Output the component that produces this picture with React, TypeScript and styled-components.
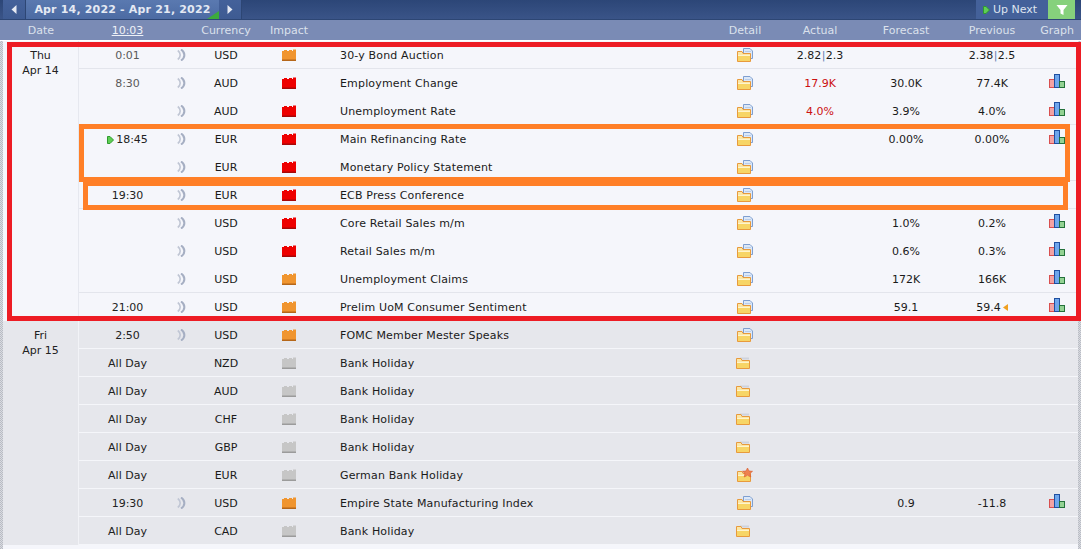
import React from "react";
import styled, { createGlobalStyle } from "styled-components";

const Global = createGlobalStyle`
  html, body { margin: 0; padding: 0; background: #fff; }
  body { font-family: "DejaVu Sans", Verdana, sans-serif; font-size: 11px; color: #111; width: 1081px; height: 549px; overflow: hidden; }
`;

const COLS = "97px 10px 80px 46px 402px 62px 88px 84px 88px 42px";

const Page = styled.div`
  position: relative;
  width: 1081px;
  height: 549px;
  overflow: hidden;
  background: #fff;
`;
const TopBar = styled.div`
  display: flex;
  height: 20px;
  padding-left: 3px;
  background: linear-gradient(#2c4677, #3a5488);
  box-sizing: border-box;
  border-bottom: 1px solid #2d4674;
`;
const NavButton = styled.div`
  width: 22px;
  display: flex;
  align-items: center;
  justify-content: center;
  background: linear-gradient(#44619a, #3e5b92);
  border-right: 1px solid #2d4674;
`;
const RangeTab = styled.div`
  position: relative;
  width: 193px;
  display: flex;
  align-items: center;
  justify-content: center;
  background: linear-gradient(#5a79b0, #4c6ba3);
  color: #e4e9f3;
  font-weight: bold;
  font-size: 11px;
  letter-spacing: 0.18px;
  white-space: nowrap;
`;
const CornerFlag = styled.span`
  position: absolute;
  right: 0;
  bottom: 0;
  width: 12px;
  height: 8px;
  background: #3cab3c;
  clip-path: polygon(100% 0, 100% 100%, 0 100%);
`;
const Spacer = styled.div`
  flex: 1;
`;
const UpNext = styled.div`
  width: 72px;
  display: flex;
  align-items: center;
  gap: 3px;
  padding-left: 7px;
  box-sizing: border-box;
  background: #44619a;
  color: #dfe5f0;
  font-size: 11px;
`;
const FilterButton = styled.div`
  width: 27px;
  margin-right: 6px;
  display: flex;
  align-items: center;
  justify-content: center;
  background: #86d17c;
`;
const HeaderRow = styled.div`
  display: grid;
  grid-template-columns: 76px ${COLS};
  height: 20px;
  padding-left: 3px;
  align-items: center;
  background: #7a8bb5;
  color: #dbe1ec;
  font-size: 11px;
  text-align: center;
`;
const Clock = styled.span`
  color: #eef1f7;
  text-decoration: underline;
`;
const Table = styled.div`
  margin: 1px 3px 0;
  background: #f5f6fb;
`;
const Edge = styled.div<{ $side: "left" | "right" }>`
  position: absolute;
  top: 41px;
  bottom: 0;
  ${(p) => p.$side}: 0;
  width: 3px;
  background: repeating-conic-gradient(#b9bcc4 0 25%, #d8dae0 0 50%) 0 0 / 2px 2px;
`;
const Day = styled.div<{ $dim?: boolean }>`
  display: flex;
  background: ${(p) => (p.$dim ? "#e6e7ec" : "#f5f6fb")};
`;
const DateCell = styled.div<{ $dim?: boolean }>`
  width: 76px;
  box-sizing: border-box;
  padding-top: 7px;
  text-align: center;
  line-height: 15px;
  color: #222;
  border-right: 1px solid ${(p) => (p.$dim ? "#f2f3f7" : "#e6e8ef")};
`;
const Rows = styled.div`
  flex: 1;
`;
const Row = styled.div<{ $dim?: boolean; $line?: boolean }>`
  display: grid;
  grid-template-columns: ${COLS};
  height: 28px;
  box-sizing: border-box;
  align-items: center;
  padding-top: ${(p) => (p.$line ? 2 : 1)}px;
  border-bottom: ${(p) => (p.$line ? `1px solid ${p.$dim ? "#f5f6fa" : "#e3e5ec"}` : "none")};
  color: #1a1a1a;
  text-align: center;
`;
const TimeText = styled.div<{ $past?: boolean }>`
  display: flex;
  align-items: center;
  justify-content: center;
  gap: 2px;
  color: ${(p) => (p.$past ? "#5a5a5a" : "#222")};
`;
const EventName = styled.div`
  padding-left: 28px;
  text-align: left;
  white-space: nowrap;
  letter-spacing: 0.16px;
`;
const IconCell = styled.div<{ $lift?: number }>`
  display: flex;
  align-items: center;
  justify-content: center;
  height: 15px;
  margin-bottom: ${(p) => (p.$lift ?? 0) * 2}px;
`;
const Value = styled.div<{ $bad?: boolean }>`
  display: flex;
  align-items: center;
  justify-content: center;
  gap: 2px;
  color: ${(p) => (p.$bad ? "#cc1111" : "#1a1a1a")};
`;
const Pipe = styled.span`
  color: #5f7fb0;
  margin: 0 0.5px;
`;
const Foot = styled.div`
  height: 4px;
  background: #f5f6fb;
`;
const Frame = styled.div<{ $x: number; $y: number; $w: number; $h: number; $c: string }>`
  position: absolute;
  left: ${(p) => p.$x}px;
  top: ${(p) => p.$y}px;
  width: ${(p) => p.$w}px;
  height: ${(p) => p.$h}px;
  box-sizing: border-box;
  border: 5px solid ${(p) => p.$c};
  pointer-events: none;
`;

const Arrow = ({ dir }: { dir: "l" | "r" }) => (
  <svg width="6" height="9" viewBox="0 0 6 9">
    <path d={dir === "l" ? "M5.5 0 L5.5 9 L0.5 4.5 Z" : "M0.5 0 L0.5 9 L5.5 4.5 Z"} fill="#e6eaf3" />
  </svg>
);
const Play = () => (
  <svg width="7" height="8" viewBox="0 0 7 8">
    <path d="M0.5 0.5 H3 L6.5 4 L3 7.5 H0.5 Z" fill="#5fce55" stroke="#2f9a2f" />
  </svg>
);
const Funnel = () => (
  <svg width="12" height="12" viewBox="0 0 12 12">
    <path d="M0.5 1 H11.5 L7.5 6 V11 L4.5 9.5 V6 Z" fill="#fff" />
  </svg>
);
const Sound = () => (
  <svg width="9" height="12" viewBox="0 0 9 12" fill="none">
    <path d="M0.8 1.5 C4 4 4 8 0.8 10.5" stroke="#c0c6d4" strokeWidth="1.6" />
    <path d="M4 0.5 C8.5 3.5 8.5 8.5 4 11.5" stroke="#a6afc3" strokeWidth="2" />
  </svg>
);
const IMPACT = {
  red: ["#ee0000", "#a80808"],
  orange: ["#f0952f", "#b5671a"],
  gray: ["#c6c6c6", "#9b9b9b"],
};
const Impact = ({ level }: { level: keyof typeof IMPACT }) => (
  <svg width="14" height="12" viewBox="0 0 14 12">
    <path d="M0 3 V2 H2 V1 H5 V2 H7 V1 H10 V2 H11 V0.5 H14 V12 H0 Z" fill={IMPACT[level][0]} />
    <rect x="0" y="10.5" width="14" height="1.5" fill={IMPACT[level][1]} />
  </svg>
);
const Folder = ({ kind }: { kind: "doc" | "plain" | "star" }) => (
  <svg width="16" height="14" viewBox="0 0 16 14" style={{ marginLeft: kind === "plain" ? -2 : 0 }}>
    {kind === "doc" && (
      <>
        <path d="M6.5 0.5 H13 L15.5 3 V10.5 H6.5 Z" fill="#dce8f8" stroke="#7f9fd0" />
        <rect x="8" y="3" width="6" height="1" fill="#b9cde9" />
      </>
    )}
    {kind === "plain" && <rect x="4" y="2.5" width="9" height="2" fill="#cfd3dc" />}
    <path d="M0.5 3.5 V13.5 H13.5 V5.5 H6 L5 3.5 Z" fill="#fbe7a6" stroke="#e89a3c" />
    <path d="M1 8 H13 V13 H1 Z" fill="#f7d566" />
    <path d="M1 7.5 H13" stroke="#fff4cc" />
    {kind === "star" && (
      <path d="M10.5 0 L12 3 L15.5 3.3 L13 5.5 L13.8 9 L10.5 7.3 L7.2 9 L8 5.5 L5.5 3.3 L9 3 Z" fill="#ee8250" stroke="#d9582a" strokeWidth="0.6" />
    )}
  </svg>
);
const Bars = () => (
  <svg width="16" height="14" viewBox="0 0 16 14">
    <rect x="0.5" y="5.5" width="5" height="8" fill="#f3a3a3" stroke="#d84f4f" />
    <rect x="5.5" y="0.5" width="5" height="13" fill="#6ea6ec" stroke="#1f4fa0" />
    <rect x="10.5" y="7.5" width="5" height="6" fill="#93d293" stroke="#23713a" />
  </svg>
);

type Ev = {
  time?: string;
  past?: boolean;
  next?: boolean;
  sound?: boolean;
  cur: string;
  imp: keyof typeof IMPACT;
  name: string;
  folder?: "doc" | "plain" | "star";
  actual?: React.ReactNode;
  bad?: boolean;
  forecast?: string;
  previous?: React.ReactNode;
  revised?: boolean;
  graph?: boolean;
  line?: boolean;
};

const pair = (a: string, b: string) => (
  <span>
    {a}
    <Pipe>|</Pipe>
    {b}
  </span>
);

const THU: Ev[] = [
  { time: "0:01", past: true, sound: true, cur: "USD", imp: "orange", name: "30-y Bond Auction", actual: pair("2.82", "2.3"), previous: pair("2.38", "2.5"), line: true },
  { time: "8:30", past: true, sound: true, cur: "AUD", imp: "red", name: "Employment Change", actual: "17.9K", bad: true, forecast: "30.0K", previous: "77.4K", graph: true },
  { sound: true, cur: "AUD", imp: "red", name: "Unemployment Rate", actual: "4.0%", bad: true, forecast: "3.9%", previous: "4.0%", graph: true, line: true },
  { time: "18:45", next: true, sound: true, cur: "EUR", imp: "red", name: "Main Refinancing Rate", forecast: "0.00%", previous: "0.00%", graph: true },
  { sound: true, cur: "EUR", imp: "red", name: "Monetary Policy Statement", line: true },
  { time: "19:30", sound: true, cur: "EUR", imp: "red", name: "ECB Press Conference", line: true },
  { sound: true, cur: "USD", imp: "red", name: "Core Retail Sales m/m", forecast: "1.0%", previous: "0.2%", graph: true },
  { sound: true, cur: "USD", imp: "red", name: "Retail Sales m/m", forecast: "0.6%", previous: "0.3%", graph: true },
  { sound: true, cur: "USD", imp: "orange", name: "Unemployment Claims", forecast: "172K", previous: "166K", graph: true, line: true },
  { time: "21:00", sound: true, cur: "USD", imp: "orange", name: "Prelim UoM Consumer Sentiment", forecast: "59.1", previous: "59.4", revised: true, graph: true, line: true },
];
const FRI: Ev[] = [
  { time: "2:50", sound: true, cur: "USD", imp: "orange", name: "FOMC Member Mester Speaks", line: true },
  { time: "All Day", cur: "NZD", imp: "gray", name: "Bank Holiday", folder: "plain", line: true },
  { time: "All Day", cur: "AUD", imp: "gray", name: "Bank Holiday", folder: "plain", line: true },
  { time: "All Day", cur: "CHF", imp: "gray", name: "Bank Holiday", folder: "plain", line: true },
  { time: "All Day", cur: "GBP", imp: "gray", name: "Bank Holiday", folder: "plain", line: true },
  { time: "All Day", cur: "EUR", imp: "gray", name: "German Bank Holiday", folder: "star", line: true },
  { time: "19:30", sound: true, cur: "USD", imp: "orange", name: "Empire State Manufacturing Index", forecast: "0.9", previous: "-11.8", graph: true, line: true },
  { time: "All Day", cur: "CAD", imp: "gray", name: "Bank Holiday", folder: "plain", line: true },
];

const RevisedMark = () => (
  <svg width="5" height="7" viewBox="0 0 5 7">
    <path d="M5 0 V7 L0 3.5 Z" fill="#f0a020" />
  </svg>
);

const EventRow = ({ e, dim }: { e: Ev; dim?: boolean }) => (
  <Row $dim={dim} $line={e.line}>
    <TimeText $past={e.past}>
      {e.next && <Play />}
      {e.time}
    </TimeText>
    <IconCell $lift={1}>{e.sound && <Sound />}</IconCell>
    <div>{e.cur}</div>
    <IconCell $lift={1}>
      <Impact level={e.imp} />
    </IconCell>
    <EventName>{e.name}</EventName>
    <IconCell $lift={e.folder === "plain" ? 2 : 1}>
      <Folder kind={e.folder ?? "doc"} />
    </IconCell>
    <Value $bad={e.bad}>{e.actual}</Value>
    <Value>{e.forecast}</Value>
    <Value>
      {e.previous}
      {e.revised && <RevisedMark />}
    </Value>
    <IconCell $lift={3}>{e.graph && <Bars />}</IconCell>
  </Row>
);

export default function App() {
  return (
    <Page>
      <Global />
      <TopBar>
        <NavButton>
          <Arrow dir="l" />
        </NavButton>
        <RangeTab>
          Apr 14, 2022 - Apr 21, 2022
          <CornerFlag />
        </RangeTab>
        <NavButton>
          <Arrow dir="r" />
        </NavButton>
        <Spacer />
        <UpNext>
          <Play />
          Up Next
        </UpNext>
        <FilterButton>
          <Funnel />
        </FilterButton>
      </TopBar>
      <HeaderRow>
        <span>Date</span>
        <Clock>10:03</Clock>
        <span />
        <span>Currency</span>
        <span>Impact</span>
        <span />
        <span>Detail</span>
        <span>Actual</span>
        <span>Forecast</span>
        <span>Previous</span>
        <span>Graph</span>
      </HeaderRow>
      <Table>
        <Day>
          <DateCell>
            Thu
            <br />
            Apr 14
          </DateCell>
          <Rows>
            {THU.map((e, i) => (
              <EventRow key={i} e={e} />
            ))}
          </Rows>
        </Day>
        <Day $dim>
          <DateCell $dim>
            Fri
            <br />
            Apr 15
          </DateCell>
          <Rows>
            {FRI.map((e, i) => (
              <EventRow key={i} e={e} dim />
            ))}
          </Rows>
        </Day>
        <Foot />
      </Table>
      <Edge $side="left" />
      <Edge $side="right" />
      <Frame $x={7} $y={42} $w={1074} $h={279} $c="#ed1c24" />
      <Frame $x={79} $y={124} $w={991} $h={58} $c="#ff7f27" />
      <Frame $x={83} $y={181} $w={985} $h={29} $c="#ff7f27" />
    </Page>
  );
}
